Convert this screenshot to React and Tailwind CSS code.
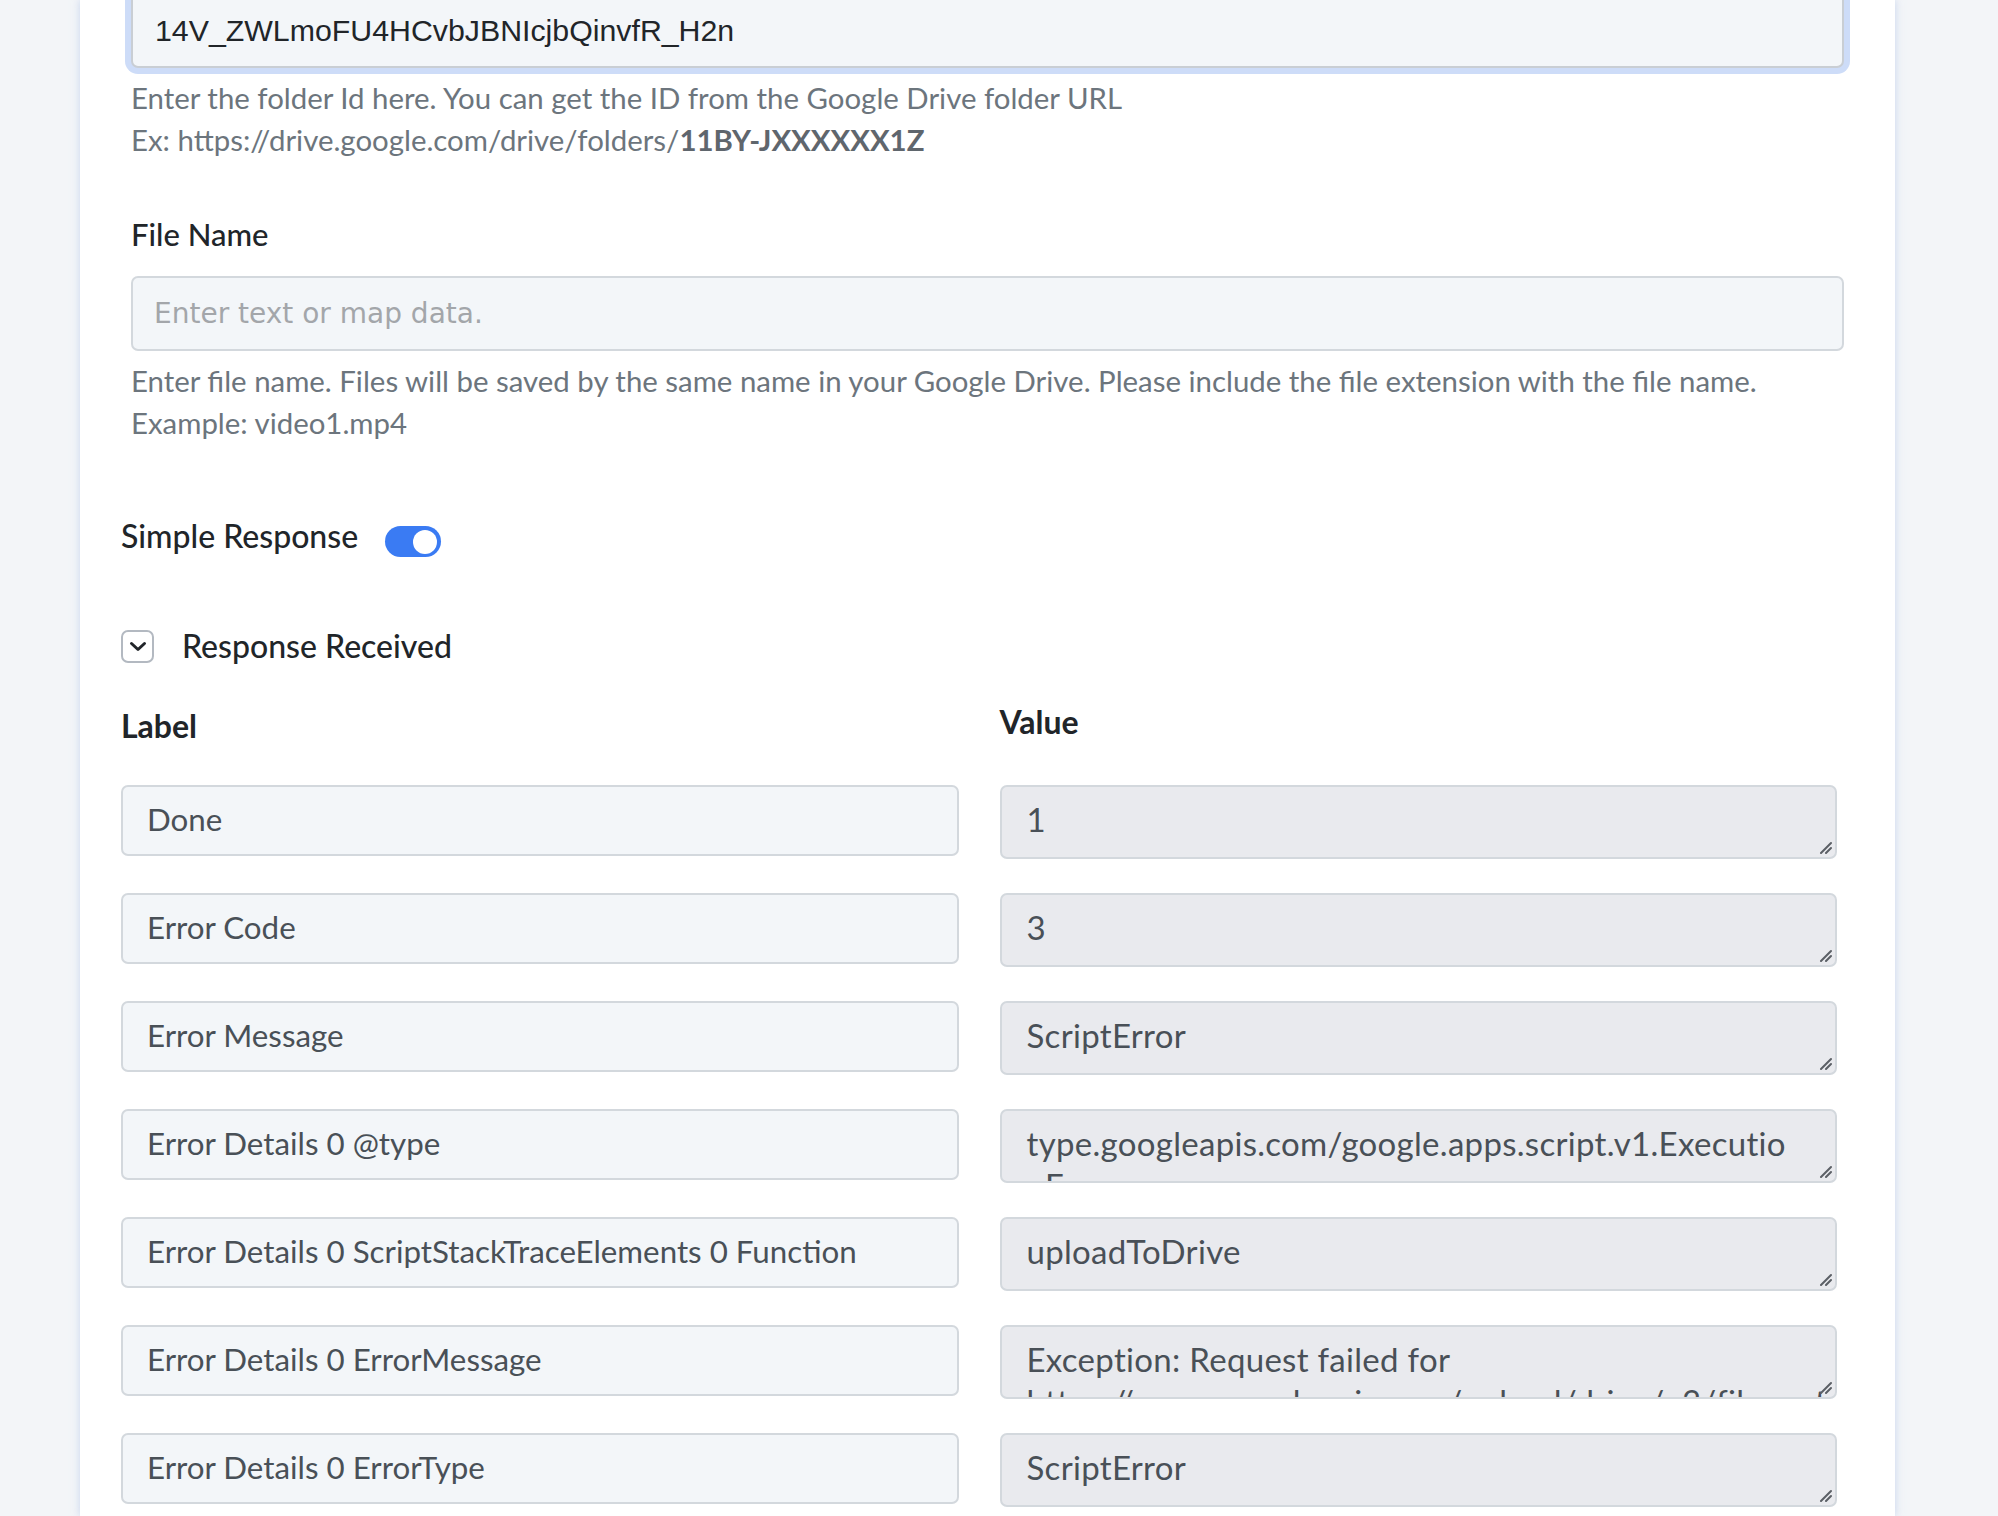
import React from "react";

const responseRows = [
  { label: "Done", value: "1" },
  { label: "Error Code", value: "3" },
  { label: "Error Message", value: "ScriptError" },
  { label: "Error Details 0 @type", value: "type.googleapis.com/google.apps.script.v1.Executio\nnError" },
  { label: "Error Details 0 ScriptStackTraceElements 0 Function", value: "uploadToDrive" },
  { label: "Error Details 0 ErrorMessage", value: "Exception: Request failed for\nhttps://www.googleapis.com/upload/drive/v3/files returned code 404." },
  { label: "Error Details 0 ErrorType", value: "ScriptError" },
];

const Helper = ({ children }) => (
  <div className="mt-[9px] text-[29.4px] leading-[42px] text-[#6c757d]">{children}</div>
);

// resize grip drawn in the textarea corner
const Grip = () => (
  <svg className="absolute right-[5px] bottom-[5px] pointer-events-none" width="14" height="14" viewBox="0 0 14 14">
    <path d="M3 13 L13 3 M8 13 L13 8" stroke="#5c6066" strokeWidth="2" strokeLinecap="round" />
  </svg>
);

const App = () => {
  return (
    <main className="min-h-screen bg-[#f3f5f8] font-['Lato','Noto_Sans',sans-serif] overflow-hidden">
      <div className="flow-root ml-[80px] mr-[103px] min-h-screen bg-white shadow-[0_0_8px_rgba(180,198,232,0.7)] pl-[41px] pr-[51px]">

        {/* Folder id */}
        <section className="pl-[10px]">
          <input
            readOnly
            value="14V_ZWLmoFU4HCvbJBNIcjbQinvfR_H2n"
            className="-mt-[7px] block w-full h-[75px] rounded-[7px] border-2 border-[#c9ced4] bg-[#f3f6f9] px-[22px] text-[30.3px] text-[#212529] font-['Liberation_Sans',Arial,sans-serif] shadow-[0_0_0_6px_#cddcf8] outline-none"
          />
          <Helper>
            Enter the folder Id here. You can get the ID from the Google Drive folder URL
            <br />
            Ex: https://drive.google.com/drive/folders/<strong className="font-bold text-[#5f666d]">11BY-JXXXXXX1Z</strong>
          </Helper>
        </section>

        {/* File name */}
        <section className="pl-[10px] mt-[52px]">
          <label className="block text-[31px] leading-[42px] font-medium text-[#212529]">File Name</label>
          <input
            placeholder="Enter text or map data."
            className="mt-[21px] block w-full h-[75px] rounded-[7px] border-2 border-[#d3d8dd] bg-[#f3f6f9] px-[21px] text-[28px] font-['DejaVu_Sans',Verdana,sans-serif] placeholder:text-[#a3a6aa] outline-none"
          />
          <Helper>
            Enter file name. Files will be saved by the same name in your Google Drive. Please include the file extension with the file name.
            <br />
            Example: video1.mp4
          </Helper>
        </section>

        {/* Simple response switch */}
        <div className="mt-[71px] flex items-center h-[42px]">
          <span className="text-[32px] leading-[42px] font-medium text-[#212529]">Simple Response</span>
          <div className="ml-[27px] mt-[11px] flex items-center w-[56px] h-[31px] rounded-full bg-[#3a7bf3]">
            <div className="ml-auto mr-[4px] w-[24px] h-[24px] rounded-full bg-white" />
          </div>
        </div>

        {/* Response received */}
        <div className="mt-[68px] flex items-center h-[42px]">
          <button className="flex items-center justify-center w-[33px] h-[33px] rounded-[7px] border-2 border-[#b3b9c1] bg-white">
            <svg width="18" height="11" viewBox="0 0 18 11" fill="none">
              <path d="M2.5 2.5 L9 8.5 L15.5 2.5" stroke="#212529" strokeWidth="3" strokeLinecap="round" strokeLinejoin="round" />
            </svg>
          </button>
          <span className="ml-[28px] text-[32px] leading-[42px] font-medium text-[#212529]">Response Received</span>
        </div>

        <div className="pr-[7px]">
          <div className="mt-[38px] grid grid-cols-2 gap-x-[41px]">
            <div className="text-[32px] leading-[42px] font-bold text-[#212529]">Label</div>
            <div className="-mt-[4px] text-[32px] leading-[42px] font-bold text-[#212529]">Value</div>
          </div>

          <div className="mt-[38px] flex flex-col gap-[34px]">
            {responseRows.map((row) => (
              <div key={row.label} className="grid grid-cols-2 gap-x-[41px] items-start">
                <input
                  readOnly
                  value={row.label}
                  className="block w-full h-[71px] rounded-[7px] border-2 border-[#d3d8dd] bg-[#f3f6f9] px-[24px] pb-[4px] text-[31.3px] text-[#495057] outline-none"
                />
                <div className="relative">
                  <textarea
                    readOnly
                    value={row.value}
                    className="block w-full h-[74px] resize-none rounded-[7px] border-2 border-[#d3d8dd] bg-[#e9eaee] px-[25px] pt-[11px] text-[33px] tracking-[0.3px] leading-[42px] whitespace-pre text-[#495057] outline-none overflow-hidden"
                  />
                  <Grip />
                </div>
              </div>
            ))}
          </div>
        </div>
      </div>
    </main>
  );
};

export default App;
